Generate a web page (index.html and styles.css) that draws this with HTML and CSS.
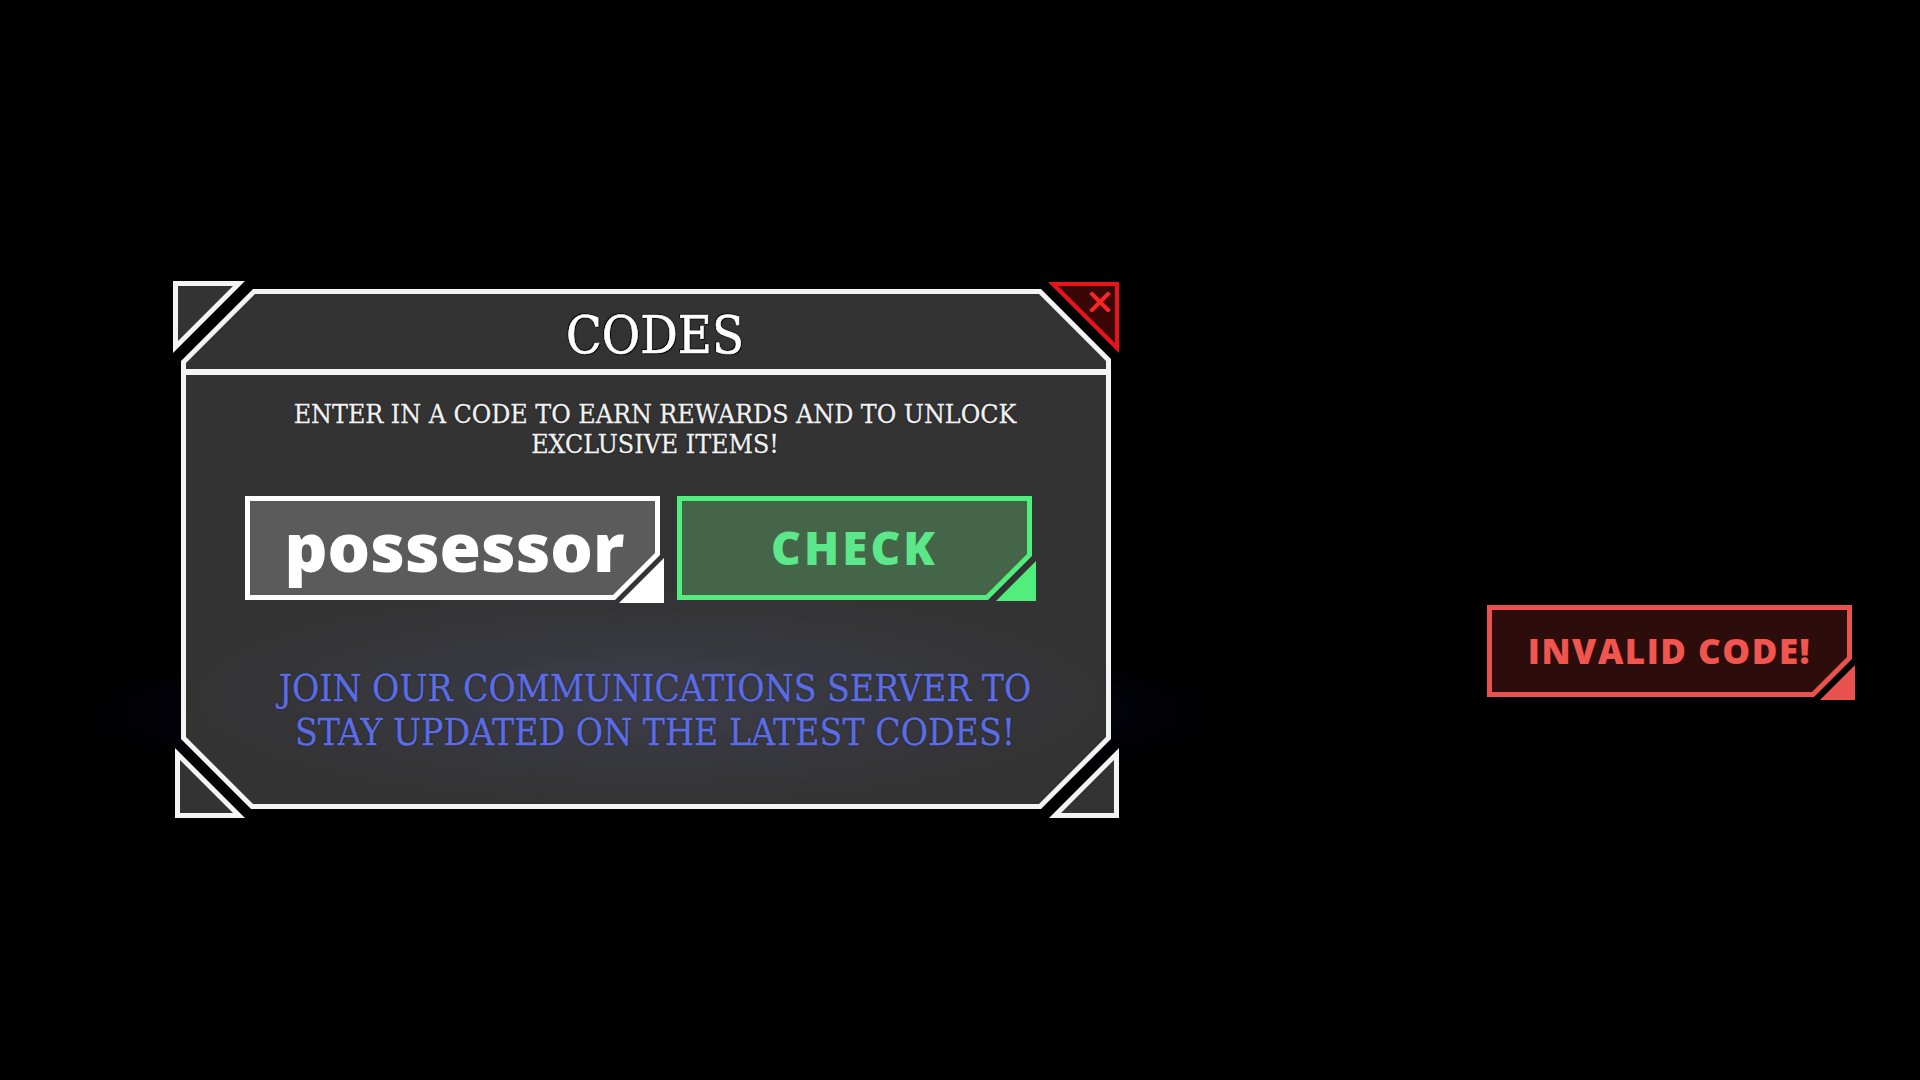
FILE: index.html
```html
<!DOCTYPE html>
<html lang="en">
<head>
<meta charset="utf-8">
<title>Codes</title>
<link rel="stylesheet" href="styles.css">
</head>
<body>
<div class="screen">
  <section class="codes">
    <span class="corner corner-tl"></span>
    <span class="corner corner-bl"></span>
    <span class="corner corner-br"></span>
    <div class="panel">
      <div class="panel-inner">
        <header class="panel-head"><h1 class="title">CODES</h1></header>
        <p class="lead">ENTER IN A CODE TO EARN REWARDS AND TO UNLOCK<br>EXCLUSIVE ITEMS!</p>
        <div class="redeem">
          <div class="field field-input">
            <div class="field-frame"><div class="field-fill">possessor</div></div>
            <span class="field-corner"></span>
          </div>
          <div class="field field-check">
            <div class="field-frame"><div class="field-fill">CHECK</div></div>
            <span class="field-corner"></span>
          </div>
        </div>
        <p class="discord">JOIN OUR COMMUNICATIONS SERVER TO<br>STAY UPDATED ON THE LATEST CODES!</p>
      </div>
    </div>
    <span class="close">
      <svg class="close-x" viewBox="0 0 22 20" width="22" height="20"><path d="M3 2 L19 18 M19 2 L3 18"/></svg>
    </span>
  </section>
  <div class="field toast">
    <div class="field-frame"><div class="field-fill">INVALID CODE!</div></div>
    <span class="field-corner"></span>
  </div>
</div>
</body>
</html>
```
FILE: styles.css
```css
html, body {
  margin: 0;
  padding: 0;
  background: #000;
}

body {
  width: 1920px;
  height: 1080px;
  overflow: hidden;
}

.screen {
  box-sizing: border-box;
  width: 1920px;
  height: 1080px;
  display: flex;
  align-items: flex-start;
  padding: 281px 0 0 173px;
  background:
    radial-gradient(ellipse 580px 90px at 652px 712px, rgba(40, 48, 150, 0.32), rgba(0, 0, 0, 0) 100%),
    #000;
}

/* ---------- codes window ---------- */
.codes {
  position: relative;
  flex: none;
  box-sizing: border-box;
  width: 946px;
  height: 537px;
  padding: 8px 8px 9px 8px;
}

.panel {
  box-sizing: border-box;
  width: 930px;
  height: 520px;
  padding: 5px;
  background: #f4f4f4;
  clip-path: polygon(72px 0, calc(100% - 70px) 0, 100% 70px, 100% calc(100% - 70px), calc(100% - 70px) 100%, 70px 100%, 0 calc(100% - 70px), 0 72px);
}

.panel-inner {
  box-sizing: border-box;
  height: 100%;
  display: flex;
  flex-direction: column;
  align-items: center;
  padding-left: 18px;
  background:
    radial-gradient(ellipse 470px 110px at 50% 79%, rgba(105, 112, 190, 0.16), rgba(51, 51, 51, 0) 100%),
    #333;
  clip-path: polygon(69px 0, calc(100% - 67px) 0, 100% 67px, 100% calc(100% - 67px), calc(100% - 67px) 100%, 67px 100%, 0 calc(100% - 67px), 0 69px);
}

.panel-head {
  align-self: stretch;
  box-sizing: border-box;
  height: 81px;
  margin-left: -18px;
  padding: 6px 0 0 18px;
  border-bottom: 6px solid #f4f4f4;
  display: flex;
  align-items: center;
  justify-content: center;
}

.title {
  margin: 0;
  font-family: "DejaVu Serif", "Liberation Serif", serif;
  font-stretch: condensed;
  font-weight: 400;
  font-size: 52px;
  line-height: 1;
  color: #fff;
  -webkit-text-stroke: 0.6px #fff;
  text-shadow: 0 0 2px #000, 1px 1px 1px #000, -1px -1px 1px #000;
}

.lead {
  margin: 24px 0 0;
  font-family: "DejaVu Serif", "Liberation Serif", serif;
  font-stretch: condensed;
  font-size: 26.5px;
  line-height: 30px;
  text-align: center;
  color: #f2f2f2;
  -webkit-text-stroke: 0.3px #f2f2f2;
  text-shadow: 0 0 2px #000;
}

.discord {
  margin: 67px 0 0;
  font-family: "DejaVu Serif", "Liberation Serif", serif;
  font-stretch: condensed;
  font-size: 37px;
  line-height: 44px;
  text-align: center;
  color: #5b6ce4;
  -webkit-text-stroke: 0.3px #5b6ce4;
  text-shadow: 0 0 2px rgba(0, 0, 0, 0.5);
}

/* ---------- outer corner triangles ---------- */
.corner {
  position: absolute;
  width: 72px;
  height: 72px;
  background: #f4f4f4;
}

.corner::after {
  content: "";
  position: absolute;
  width: 55px;
  height: 55px;
  background: #333;
}

.corner-tl {
  left: 0;
  top: 0;
  clip-path: polygon(0 0, 100% 0, 0 100%);
}
.corner-tl::after {
  left: 5px;
  top: 5px;
  clip-path: polygon(0 0, 100% 0, 0 100%);
}

.corner-bl {
  left: 2px;
  bottom: 0;
  width: 70px;
  height: 70px;
  clip-path: polygon(0 0, 0 100%, 100% 100%);
}
.corner-bl::after {
  left: 5px;
  bottom: 5px;
  width: 53px;
  height: 53px;
  clip-path: polygon(0 0, 0 100%, 100% 100%);
}

.corner-br {
  right: 0;
  bottom: 0;
  width: 70px;
  height: 70px;
  clip-path: polygon(100% 0, 100% 100%, 0 100%);
}
.corner-br::after {
  right: 5px;
  bottom: 5px;
  width: 53px;
  height: 53px;
  clip-path: polygon(100% 0, 100% 100%, 0 100%);
}

/* close button */
.close {
  position: absolute;
  right: 0;
  top: 1px;
  width: 71px;
  height: 71px;
  background: #e8141b;
  clip-path: polygon(0 0, 100% 0, 100% 100%);
}
.close::before {
  content: "";
  position: absolute;
  right: 4px;
  top: 4px;
  width: 57px;
  height: 57px;
  background: #3a0707;
  clip-path: polygon(0 0, 100% 0, 100% 100%);
}
.close-x {
  position: absolute;
  right: 8px;
  top: 10px;
  fill: none;
  stroke: #ff2424;
  stroke-width: 4;
  stroke-linecap: square;
}

/* ---------- input row ---------- */
.redeem {
  align-self: flex-start;
  display: flex;
  gap: 17px;
  margin: 37px 0 0 41px;
}

.field {
  --cut: 44px;
  --border: #fff;
  --fill: #5b5b5b;
  position: relative;
  flex: none;
  height: 104px;
}

.field-frame {
  box-sizing: border-box;
  width: 100%;
  height: 100%;
  padding: 5px;
  background: var(--border);
  clip-path: polygon(0 0, 100% 0, 100% calc(100% - var(--cut)), calc(100% - var(--cut)) 100%, 0 100%);
}

.field-fill {
  box-sizing: border-box;
  height: 100%;
  display: flex;
  align-items: center;
  justify-content: center;
  background: var(--fill);
  clip-path: polygon(0 0, 100% 0, 100% calc(100% - var(--cut) + 3px), calc(100% - var(--cut) + 3px) 100%, 0 100%);
  font-family: "Open Sans", "Liberation Sans", sans-serif;
  font-weight: 800;
}

.field-corner {
  position: absolute;
  right: -4px;
  bottom: -3px;
  width: 45px;
  height: 45px;
  background: var(--border);
  clip-path: polygon(100% 0, 100% 100%, 0 100%);
}

.field-input {
  --cut: 45px;
  width: 415px;
}
.field-input .field-fill {
  font-size: 67px;
  color: #fff;
  padding: 0 0 4px 4px;
}

.field-check {
  --cut: 44px;
  --border: #52ee7d;
  --fill: #456549;
  width: 355px;
}
.field-check .field-fill {
  font-size: 46px;
  letter-spacing: 3px;
  color: #5ce88a;
  padding-bottom: 2px;
}
.field-check .field-corner {
  width: 40px;
  height: 40px;
  right: -4px;
  bottom: -1px;
}

/* ---------- toast ---------- */
.toast {
  --cut: 38px;
  --border: #e9524f;
  --fill: #2d0c0c;
  width: 365px;
  height: 92px;
  margin: 324px 0 0 368px;
}
.toast .field-fill {
  font-size: 35px;
  letter-spacing: 1.5px;
  color: #f0554f;
  padding-bottom: 2px;
}
.toast .field-corner {
  width: 35px;
  height: 35px;
  right: -3px;
  bottom: -3px;
}
```
